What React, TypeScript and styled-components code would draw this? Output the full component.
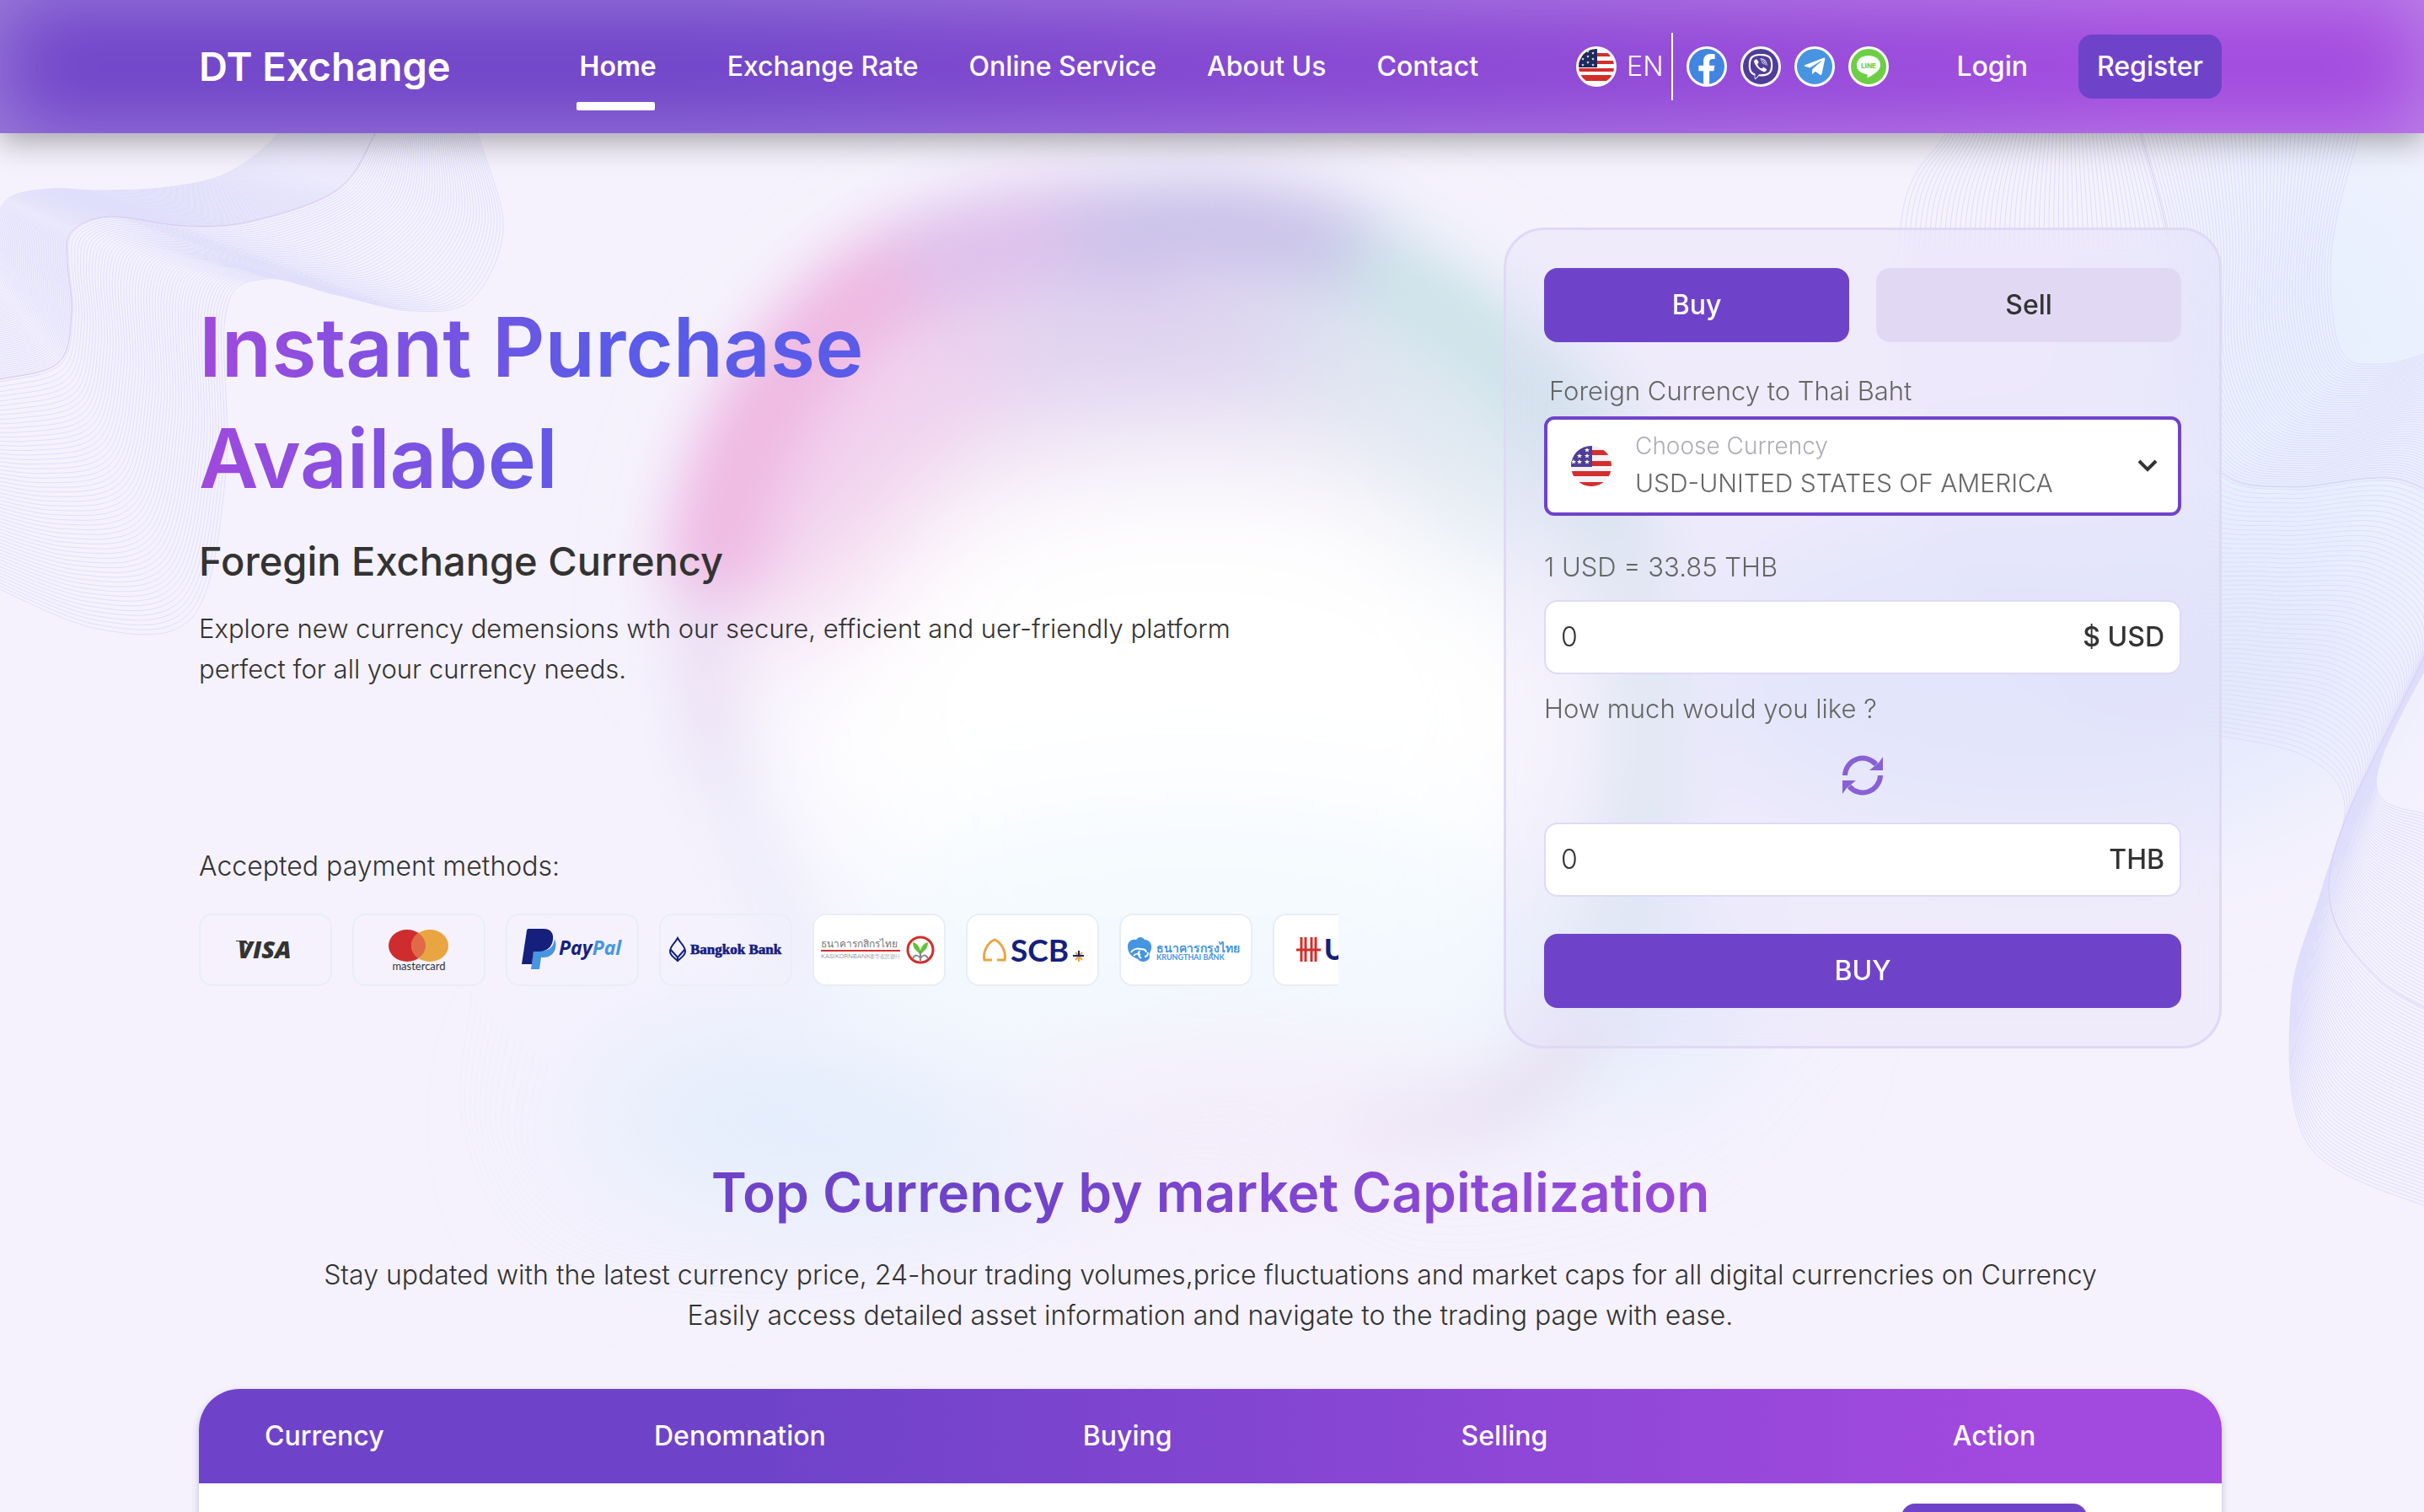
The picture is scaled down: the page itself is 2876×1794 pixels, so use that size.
import React, { useState } from "react";
import styled, { createGlobalStyle } from "styled-components";
import { FaFacebookF, FaTelegramPlane, FaViber } from "react-icons/fa";

const sans = `Inter, "Noto Sans", "Noto Sans CJK SC", sans-serif`;
const violet = "#6f43c9";
const brandGradient = `linear-gradient(90deg, ${violet} 28%, #a249df 90%)`;

const GlobalStyle = createGlobalStyle`
  * { box-sizing: border-box; }
  body { margin: 0; background: #f5f2fd; color: #333; font: 300 32px/48px ${sans}; }
  button, input, select { font: inherit; color: inherit; }
  h1, h2, h3, p { margin: 0; }
`;

const Page = styled.div`
  position: relative;
  height: 100vh;
  overflow: hidden;
`;

const Backdrop = styled.svg`
  position: absolute;
  top: 0;
  left: 0;
  width: 100%;
  height: auto;
  z-index: -1;
`;

const Header = styled.header`
  position: relative;
  background: ${brandGradient};
  color: #fff;
  box-shadow: inset 0 0 100px rgba(255, 255, 255, 0.34), 0 8px 36px rgba(0, 0, 0, 0.36);
`;

const Container = styled.div`
  margin: 0 240px 0 236px;
`;

const HeaderRow = styled(Container)`
  display: flex;
  align-items: center;
  height: 158px;
`;

const Logo = styled.a`
  flex: 1 0 auto;
  color: inherit;
  text-decoration: none;
  font-size: 47px;
  line-height: 64px;
  font-weight: 600;
`;

const Nav = styled.nav`
  display: flex;
  gap: 60px;
  margin-right: 116px;
`;

const NavLink = styled.a<{ $active?: boolean }>`
  position: relative;
  color: inherit;
  text-decoration: none;
  font-weight: ${(p) => (p.$active ? 600 : 500)};
  margin-right: ${(p) => (p.$active ? "24px" : "0")};
  &::after {
    content: "";
    display: ${(p) => (p.$active ? "block" : "none")};
    position: absolute;
    left: -4px;
    right: 2px;
    bottom: -28px;
    height: 10px;
    border-radius: 2px;
    background: #fff;
  }
`;

const Language = styled.button`
  display: flex;
  align-items: center;
  gap: 12px;
  height: 80px;
  padding: 0 10px 0 0;
  border: 0;
  border-right: 2px solid #fff;
  background: none;
  font-weight: 300;
`;

const Socials = styled.div`
  display: flex;
  gap: 16px;
  margin: 0 80px 0 16px;
`;

const Social = styled.a<{ $bg: string }>`
  display: grid;
  place-items: center;
  width: 48px;
  height: 48px;
  border: 3px solid #fff;
  border-radius: 50%;
  overflow: hidden;
  background: ${(p) => p.$bg};
  color: #fff;
`;

const FacebookGlyph = styled(FaFacebookF)`
  align-self: end;
`;

const Login = styled.a`
  color: inherit;
  text-decoration: none;
  font-weight: 500;
  margin-right: 60px;
`;

const Register = styled.button`
  min-width: 170px;
  height: 76px;
  padding: 0 16px;
  border: 0;
  border-radius: 16px;
  background: ${violet};
  font-weight: 500;
`;

const Hero = styled(Container)`
  display: grid;
  grid-template-columns: minmax(0, 1352fr) minmax(0, 852fr);
  gap: 196px;
  padding-top: 112px;
`;

const Intro = styled.div`
  padding-top: 76px;
`;

const Headline = styled.h1`
  font-size: 97px;
  line-height: 132px;
  font-weight: 600;
  background: linear-gradient(90deg, #a049dc 0%, #5a5be8 36%);
  background-clip: text;
  -webkit-background-clip: text;
  color: transparent;
`;

const SubHeadline = styled.h2`
  margin-top: 24px;
  font-size: 47px;
  line-height: 64px;
  font-weight: 500;
`;

const Lead = styled.p`
  margin-top: 24px;
  font-size: 31px;
`;

const PayTitle = styled.h3`
  margin-top: 186px;
  font-size: 32px;
  line-height: 48px;
  font-weight: 300;
`;

const PayStrip = styled.ul`
  display: flex;
  gap: 24px;
  margin: 32px 0 0;
  padding: 0;
  list-style: none;
  overflow: hidden;
`;

const PayCard = styled.li<{ $solid?: boolean }>`
  flex: none;
  width: 158px;
  height: 86px;
  border: 2px solid #e8eef6;
  border-radius: 16px;
  overflow: hidden;
  background: ${(p) => (p.$solid ? "#fff" : "transparent")};
  & > svg {
    display: block;
  }
`;

const Exchange = styled.form`
  display: flex;
  flex-direction: column;
  padding: 45px;
  border: 3px solid #e0d8f4;
  border-radius: 48px;
  background: rgba(228, 220, 247, 0.28);
  backdrop-filter: blur(20px);
`;

const Tabs = styled.div`
  display: grid;
  grid-template-columns: 1fr 1fr;
  gap: 32px;
  margin-bottom: 34px;
`;

const Tab = styled.button<{ $active: boolean }>`
  height: 88px;
  border: 0;
  border-radius: 16px;
  font-weight: 500;
  background: ${(p) => (p.$active ? violet : "#e1d9f4")};
  color: ${(p) => (p.$active ? "#fff" : "#333")};
`;

const FieldLabel = styled.label`
  color: #666;
  font-size: 31px;
`;

const IndentedLabel = styled(FieldLabel)`
  padding-left: 6px;
`;

const SelectBox = styled.div`
  display: flex;
  align-items: center;
  gap: 28px;
  height: 118px;
  margin: 6px 0 37px;
  padding: 0 24px 0 28px;
  border: 4px solid ${violet};
  border-radius: 12px;
  background: #fff;
`;

const SelectText = styled.div`
  flex: 1;
  display: flex;
  flex-direction: column;
`;

const SelectHint = styled.span`
  color: #adadb8;
  font-size: 28px;
  line-height: 40px;
`;

const CurrencySelect = styled.select`
  appearance: none;
  width: 100%;
  height: 48px;
  padding: 0;
  border: 0;
  outline: 0;
  background: none;
  color: #666;
  font-size: 30px;
`;

const AmountBox = styled.div`
  display: flex;
  align-items: center;
  height: 88px;
  padding: 0 18px;
  border: 2px solid #e1d9f4;
  border-radius: 16px;
  background: #fff;
  font-weight: 500;
`;

const Amount = styled.input`
  flex: 1;
  min-width: 0;
  padding: 0;
  border: 0;
  outline: 0;
  background: none;
  font-weight: 300;
`;

const FromAmount = styled(AmountBox)`
  margin: 15px 0 17px;
`;

const Swap = styled.button`
  align-self: center;
  width: 48px;
  height: 48px;
  margin: 31px 0 32px;
  padding: 0;
  border: 0;
  background: none;
`;

const Submit = styled.button`
  height: 88px;
  margin-top: 44px;
  border: 0;
  border-radius: 16px;
  background: ${violet};
  color: #fff;
  font-weight: 500;
`;

const Market = styled(Container)`
  padding-top: 127px;
  text-align: center;
`;

const MarketTitle = styled.h2`
  display: inline-block;
  font-size: 64px;
  line-height: 88px;
  font-weight: 600;
  background: linear-gradient(90deg, ${violet} 28%, #9a49db 100%);
  background-clip: text;
  -webkit-background-clip: text;
  color: transparent;
`;

const MarketText = styled.p`
  margin: 30px 0 63px;
`;

const Rates = styled.table`
  width: 100%;
  table-layout: fixed;
  border-collapse: separate;
  border-spacing: 0;
  border-radius: 48px;
  overflow: hidden;
  background: #fff;
  text-align: left;
  box-shadow: 0 4px 8px rgba(80, 60, 130, 0.3);
  thead {
    background: ${brandGradient};
    color: #fff;
  }
`;

const HeadCell = styled.th<{ $w: string; $center?: boolean; $lead?: boolean }>`
  width: ${(p) => p.$w};
  height: 112px;
  padding: 0 0 0 ${(p) => (p.$lead ? "78px" : "0")};
  font-weight: 500;
  text-align: ${(p) => (p.$center ? "center" : "left")};
`;

const Cell = styled.td`
  padding: 24px 0;
  text-align: center;
`;

const RowAction = styled.button`
  width: 220px;
  height: 88px;
  border: 0;
  border-radius: 16px;
  background: ${violet};
`;

/* ---------- background artwork ---------- */

type Pt = [number, number];

const leftWave: Pt[][] = [
  [[350, 100], [330, 158], [270, 205], [200, 222], [120, 226], [60, 224], [10, 235], [-5, 270], [-10, 300], [-20, 320], [-60, 330], [-100, 340]],
  [[470, 90], [445, 158], [400, 225], [300, 262], [220, 268], [130, 257], [85, 275], [80, 310], [85, 370], [70, 430], [0, 450], [-80, 460]],
  [[555, 90], [567, 158], [597, 270], [560, 355], [490, 369], [400, 350], [315, 331], [268, 370], [268, 560], [230, 730], [120, 747], [-20, 690]],
];

const rightWave: Pt[][] = [
  [[2340, 90], [2308, 158], [2255, 270], [2270, 600], [2450, 850], [2640, 874], [2740, 900], [2782, 955], [2755, 1055], [2718, 1190], [2740, 1360], [2890, 1436]],
  [[2520, 90], [2540, 158], [2575, 300], [2580, 470], [2637, 562], [2720, 578], [2850, 570], [2930, 640], [2880, 770], [2765, 1030], [2820, 1160], [2960, 1230]],
  [[2810, 90], [2799, 158], [2772, 260], [2765, 340], [2780, 420], [2830, 432], [2940, 420], [3010, 560], [2930, 700], [2820, 920], [2890, 970], [3000, 1000]],
];

const bottomWave: Pt[][] = [
  [[560, 1180], [550, 1340], [640, 1490], [900, 1540], [1180, 1500], [1420, 1380], [1700, 1500], [2020, 1440], [2200, 1260]],
  [[600, 1220], [590, 1360], [700, 1480], [920, 1500], [1160, 1440], [1440, 1340], [1680, 1440], [1940, 1390], [2120, 1240]],
  [[650, 1260], [640, 1380], [760, 1460], [940, 1470], [1140, 1400], [1450, 1300], [1660, 1390], [1860, 1340], [2040, 1220]],
];

function blend(set: Pt[][], t: number): Pt[] {
  const k = t < 0.5 ? 0 : 1;
  const f = t * 2 - k;
  return set[k].map(([x, y], i) => [x + (set[k + 1][i][0] - x) * f, y + (set[k + 1][i][1] - y) * f]);
}

function smooth(p: Pt[]): string {
  let d = `M${p[0].join(" ")}`;
  for (let i = 0; i < p.length - 1; i++) {
    const a = p[Math.max(0, i - 1)];
    const b = p[i];
    const c = p[i + 1];
    const e = p[Math.min(p.length - 1, i + 2)];
    d += `C${b[0] + (c[0] - a[0]) / 6} ${b[1] + (c[1] - a[1]) / 6} ${c[0] - (e[0] - b[0]) / 6} ${c[1] - (e[1] - b[1]) / 6} ${c[0]} ${c[1]}`;
  }
  return d;
}

function Wave({ set, count, color, accent }: { set: Pt[][]; count: number; color: string; accent?: string }) {
  return (
    <g fill="none" stroke={color} strokeWidth="1">
      {Array.from({ length: count }, (_, i) => (
        <path key={i} d={smooth(blend(set, i / (count - 1)))} />
      ))}
      {accent && <path d={smooth(set[1])} stroke={accent} />}
    </g>
  );
}

function Artwork() {
  return (
    <Backdrop viewBox="0 0 2876 1794" aria-hidden="true">
      <defs>
        <filter id="soft" x="-50%" y="-50%" width="200%" height="200%">
          <feGaussianBlur stdDeviation="34" />
        </filter>
        <filter id="wide" x="-60%" y="-60%" width="220%" height="220%">
          <feGaussianBlur stdDeviation="80" />
        </filter>
      </defs>
      <g filter="url(#wide)">
        <ellipse cx="2760" cy="440" rx="200" ry="300" fill="#e8f0fe" />
        <ellipse cx="2420" cy="800" rx="420" ry="190" fill="#e2e9fd" />
        <ellipse cx="980" cy="1330" rx="300" ry="110" fill="#e2edfc" />
        <ellipse cx="1900" cy="1180" rx="180" ry="120" fill="#e3ecfc" />
      </g>
      <g filter="url(#soft)" fill="none" strokeWidth="110">
        <path d="M870 940C840 860 836 760 850 660" stroke="#e9dff4" strokeWidth="70" />
        <path d="M860 700C870 520 980 360 1130 310" stroke="#eeb3e0" strokeWidth="130" />
        <path d="M1080 340C1200 280 1300 290 1400 300" stroke="#dfc0ec" strokeWidth="140" />
        <path d="M1280 300C1420 260 1540 280 1640 330" stroke="#c6bfe8" strokeWidth="120" />
        <path d="M1600 320C1740 380 1850 480 1910 600" stroke="#cbe3e8" strokeWidth="120" />
        <path d="M1900 600C1960 760 1960 1000 1890 1200" stroke="#d9e8ee" strokeWidth="90" />
        <path d="M1880 1180C1820 1310 1740 1330 1600 1310" stroke="#e4dcf0" strokeWidth="80" />
        <path d="M870 900C900 1040 940 1080 980 1160" stroke="#eae8f9" strokeWidth="60" />
      </g>
      <g filter="url(#wide)">
        <path d="M930 740C950 560 1040 440 1200 400" fill="none" stroke="#f0c4e8" strokeWidth="150" />
        <path d="M1180 420C1300 370 1440 370 1560 400" fill="none" stroke="#d6c9ec" strokeWidth="170" />
        <path d="M1540 400C1680 430 1780 540 1820 660" fill="none" stroke="#d3e4ec" strokeWidth="150" />
        <ellipse cx="1390" cy="620" rx="340" ry="160" fill="#f3eaf8" />
        <ellipse cx="1410" cy="860" rx="480" ry="300" fill="#fff" />
        <ellipse cx="1410" cy="860" rx="400" ry="280" fill="#fff" />
        <ellipse cx="1420" cy="1130" rx="450" ry="170" fill="#f3f9fe" />
        <ellipse cx="1480" cy="1320" rx="280" ry="60" fill="#f5e7f9" />
      </g>
      <Wave set={leftWave} count={110} color="#e0dffb" accent="#dcc6ec" />
      <Wave set={rightWave} count={110} color="#deddfb" accent="#d9cdf1" />
      <Wave set={bottomWave} count={14} color="#f0effc" />
    </Backdrop>
  );
}

/* ---------- icons ---------- */

function UsFlag({ id, ring, blue }: { id: string; ring?: boolean; blue: string }) {
  const r = ring ? 21 : 24;
  const stripes = ring ? [12, 21, 30, 38] : [5, 18, 30, 43];
  const stars = ring
    ? [[8, 8], [14, 6], [20, 8], [8, 15], [14, 12], [20, 15], [8, 22], [14, 19], [20, 22]]
    : [[19, 5], [10, 12], [19, 12], [10, 19], [19, 19], [3, 19]];
  return (
    <svg width="48" height="48" viewBox="0 0 48 48" aria-hidden="true">
      <clipPath id={id}>
        <circle cx="24" cy="24" r={r} />
      </clipPath>
      {ring && <circle cx="24" cy="24" r="24" fill="#fff" />}
      <g clipPath={`url(#${id})`}>
        <rect width="48" height="48" fill={ring ? "#fff" : "#f3f1f8"} />
        {stripes.map((y) => (
          <rect key={y} y={y - (ring ? 4 : 0)} width="48" height={ring ? 4 : 6} fill="#d22f2c" />
        ))}
        {ring && <rect y="37" width="48" height="4" fill="#d22f2c" />}
        <rect width="25" height="25" fill={blue} />
        {stars.map(([x, y]) => (
          <path
            key={`${x}-${y}`}
            transform={`translate(${x} ${y}) scale(${ring ? 0.6 : 1})`}
            fill="#fff"
            d="M0-3L.8-1 3-1 1.300.4 1.900 2.600 0 1.300-1.900 2.600-1.300.4-3-1-.8-1z"
          />
        ))}
      </g>
    </svg>
  );
}

function LineBubble() {
  return (
    <svg width="42" height="42" viewBox="0 0 42 42" aria-hidden="true">
      <path d="M21 8C12 8 7 13 7 19.500c0 5.500 4.500 9.500 11.500 10.500 1.500.3 1 2 .8 4.500C25 32 35 26 35 19.500 35 13 30 8 21 8z" fill="#fff" />
      <text x="21" y="23" textAnchor="middle" fontFamily="Inter" fontWeight="800" fontSize="8" fill="#6ccf45">
        LINE
      </text>
    </svg>
  );
}

function SwapIcon() {
  const half = (
    <>
      <path d="M3 24A21 21 0 0 1 40 11" fill="none" stroke="#8860d6" strokeWidth="6" />
      <path d="M48 2V18H32L38 13L43 9z" fill="#8860d6" />
    </>
  );
  return (
    <svg width="48" height="48" viewBox="0 0 48 48" aria-hidden="true">
      {half}
      <g transform="rotate(180 24 24)">{half}</g>
    </svg>
  );
}

/* ---------- payment marks ---------- */

function Mark({ label, children }: { label: string; children: React.ReactNode }) {
  return (
    <svg width="154" height="82" viewBox="2 2 154 82" role="img" aria-label={label}>
      {children}
    </svg>
  );
}

const VisaMark = () => (
  <Mark label="Visa">
    <text x="46" y="53" fontFamily="Open Sans" fontStyle="italic" fontWeight="800" fontSize="29" fill="#333">VISA</text>
    <path d="M44 32h12l4 6c-5-3-9-5-16-5z" fill="#333" />
  </Mark>
);

const MastercardMark = () => (
  <Mark label="Mastercard">
    <ellipse cx="65" cy="38" rx="22" ry="19" fill="#cf2d2d" />
    <ellipse cx="92" cy="38" rx="22" ry="19" fill="#e9a541" />
    <path d="M78.500 23a22 19 0 0 1 0 30a22 19 0 0 1 0-30z" fill="#e06a47" />
    <text x="79" y="67" textAnchor="middle" fontFamily="Lato" fontWeight="400" fontSize="13" fill="#333">mastercard</text>
  </Mark>
);

const PaypalMark = () => (
  <Mark label="PayPal">
    <path d="M30 66l3-22h10c10 0 14-6 15-14 4 9 0 22-13 22h-3l-2 14z" fill="#4795e0" />
    <path d="M19 60L25 20q.3-2 2-2h18c9 0 12 6 11 13-1 9-8 14-17 14h-6l-2 15z" fill="#15207c" />
    <text x="63" y="49" fontFamily="Open Sans" fontStyle="italic" fontWeight="700" fontSize="23" fill="#15207c">
      Pay<tspan fill="#4795e0">Pal</tspan>
    </text>
  </Mark>
);

const BangkokMark = () => (
  <Mark label="Bangkok Bank">
    <path d="M22 29c3 6 9 9 9 16 0 5-5 7-9 11-4-4-9-6-9-11 0-7 6-10 9-16zM13 42l9 10 9-10M22 52v5" fill="none" stroke="#15207c" strokeWidth="2" />
    <text x="37" y="48" fontFamily="Liberation Serif" fontWeight="700" fontSize="17" fill="#15207c" stroke="#15207c" strokeWidth="0.6">Bangkok Bank</text>
  </Mark>
);

const KasikornMark = () => (
  <Mark label="Kasikornbank">
    <text x="10" y="40" fontFamily="Noto Sans" fontWeight="500" fontSize="12" fill="#777">ธนาคารกสิกรไทย</text>
    <rect x="10" y="43" width="94" height="2" fill="#d22f2c" />
    <text x="10" y="53" fontFamily="Roboto" fontSize="8" fill="#777">KASIKORNBANK</text>
    <text x="68" y="53" fontFamily="Noto Sans CJK SC" fontSize="6" fill="#777">泰华农民银行</text>
    <circle cx="128" cy="43" r="15" fill="#fff" stroke="#d22f2c" strokeWidth="3" />
    <path d="M128 50c-2-6-9-6-9-16 5 1 8 5 9 10 1-5 4-9 9-10 0 10-7 10-9 16z" fill="#63c23b" />
    <path d="M119 53c3-5 6-4 9 0 3-4 6-5 9 0M128 44v12" fill="none" stroke="#888" strokeWidth="2" />
  </Mark>
);

const ScbMark = () => (
  <Mark label="SCB">
    <path d="M31 55h-9c-2-9 3-20 12-24 9 4 14 15 12 24h-9" fill="none" stroke="#e9a541" strokeWidth="3" />
    <text x="53" y="57" fontFamily="Lato" fontWeight="700" fontSize="37" fill="#15207c">SCB</text>
    <path d="M130 46l8 9M138 46l-8 9M134 50v7" stroke="#e9a541" strokeWidth="2" />
    <path d="M127 50h13M134 44v6" stroke="#15207c" strokeWidth="2" />
  </Mark>
);

const KrungthaiMark = () => (
  <Mark label="Krungthai Bank">
    <path d="M10 39c0-6 5-9 10-8 3-5 9-3 10 0 6 0 9 5 8 11-1 4-3 5-2 9 0 4-5 6-8 6-5 0-4-3-8-4-6-2-10-7-10-14z" fill="#4795e0" />
    <path d="M14 46c2-4 8-5 11-4 3 1 6-1 7 4M17 50c3-3 5-3 8-1M24 44c-2 4-1 7 2 9M30 51c3 0 4-2 4-5" fill="none" stroke="#fff" strokeWidth="2" />
    <text x="44" y="46" fontFamily="Noto Sans" fontWeight="700" fontSize="14" fill="#4795e0">ธนาคารกรุงไทย</text>
    <text x="44" y="55" fontFamily="Lato" fontWeight="700" fontSize="9" fill="#4795e0">KRUNGTHAI BANK</text>
  </Mark>
);

const UobMark = () => (
  <Mark label="UOB">
    <path d="M34 28v29M39 28v29M46 28v29M51 28v29" stroke="#d22f2c" strokeWidth="3" />
    <path d="M28 43h29" stroke="#d22f2c" strokeWidth="3" />
    <text x="61" y="55" fontFamily="Lato" fontWeight="900" fontSize="34" fill="#15207c">UOB</text>
  </Mark>
);

const payments = [
  { name: "visa", Logo: VisaMark, solid: false },
  { name: "mastercard", Logo: MastercardMark, solid: false },
  { name: "paypal", Logo: PaypalMark, solid: false },
  { name: "bangkok", Logo: BangkokMark, solid: false },
  { name: "kasikorn", Logo: KasikornMark, solid: true },
  { name: "scb", Logo: ScbMark, solid: true },
  { name: "krungthai", Logo: KrungthaiMark, solid: true },
  { name: "uob", Logo: UobMark, solid: true },
];

const navItems = ["Home", "Exchange Rate", "Online Service", "About Us", "Contact"];

export default function App() {
  const [mode, setMode] = useState<"buy" | "sell">("buy");
  const [from, setFrom] = useState("0");
  const [to, setTo] = useState("0");

  return (
    <Page>
      <GlobalStyle />
      <Artwork />
      <Header>
        <HeaderRow>
          <Logo href="#">DT Exchange</Logo>
          <Nav>
            {navItems.map((item, i) => (
              <NavLink key={item} href="#" $active={i === 0}>{item}</NavLink>
            ))}
          </Nav>
          <Language type="button">
            <UsFlag id="flag-nav" ring blue="#1f2a5c" />
            EN
          </Language>
          <Socials>
            <Social href="#" aria-label="Facebook" $bg="#4285e0"><FacebookGlyph size={36} /></Social>
            <Social href="#" aria-label="Viber" $bg="#4f3d99"><FaViber size={30} /></Social>
            <Social href="#" aria-label="Telegram" $bg="#4795e0"><FaTelegramPlane size={28} /></Social>
            <Social href="#" aria-label="Line" $bg="#6ccf45"><LineBubble /></Social>
          </Socials>
          <Login href="#">Login</Login>
          <Register type="button">Register</Register>
        </HeaderRow>
      </Header>

      <main>
        <Hero>
          <Intro>
            <Headline>Instant Purchase<br />Availabel</Headline>
            <SubHeadline>Foregin Exchange Currency</SubHeadline>
            <Lead>
              Explore new currency demensions wth our secure, efficient and uer-friendly platform
              <br />
              perfect for all your currency needs.
            </Lead>
            <PayTitle>Accepted payment methods:</PayTitle>
            <PayStrip>
              {payments.map(({ name, Logo: Brand, solid }) => (
                <PayCard key={name} $solid={solid}><Brand /></PayCard>
              ))}
            </PayStrip>
          </Intro>

          <Exchange onSubmit={(e) => e.preventDefault()}>
            <Tabs>
              <Tab type="button" $active={mode === "buy"} onClick={() => setMode("buy")}>Buy</Tab>
              <Tab type="button" $active={mode === "sell"} onClick={() => setMode("sell")}>Sell</Tab>
            </Tabs>
            <IndentedLabel htmlFor="currency">Foreign Currency to Thai Baht</IndentedLabel>
            <SelectBox>
              <UsFlag id="flag-select" blue="#4f3d99" />
              <SelectText>
                <SelectHint>Choose Currency</SelectHint>
                <CurrencySelect id="currency">
                  <option>USD-UNITED STATES OF AMERICA</option>
                </CurrencySelect>
              </SelectText>
              <svg width="24" height="16" viewBox="0 0 24 16" aria-hidden="true">
                <path d="M2 2l10 10L22 2" fill="none" stroke="#333" strokeWidth="4" />
              </svg>
            </SelectBox>
            <FieldLabel htmlFor="from">1 USD = 33.85 THB</FieldLabel>
            <FromAmount>
              <Amount id="from" value={from} onChange={(e) => setFrom(e.target.value)} />
              $ USD
            </FromAmount>
            <FieldLabel htmlFor="to">How much would you like ?</FieldLabel>
            <Swap type="button" aria-label="Swap currencies"><SwapIcon /></Swap>
            <AmountBox>
              <Amount id="to" value={to} onChange={(e) => setTo(e.target.value)} />
              THB
            </AmountBox>
            <Submit type="submit">BUY</Submit>
          </Exchange>
        </Hero>

        <Market>
          <MarketTitle>Top Currency by market Capitalization</MarketTitle>
          <MarketText>
            Stay updated with the latest currency price, 24-hour trading volumes,price fluctuations and market caps for all digital currencries on Currency
            <br />
            Easily access detailed asset information and navigate to the trading page with ease.
          </MarketText>
          <Rates>
            <thead>
              <tr>
                <HeadCell $w="22.5%" $lead>Currency</HeadCell>
                <HeadCell $w="21.2%">Denomnation</HeadCell>
                <HeadCell $w="18.7%">Buying</HeadCell>
                <HeadCell $w="15.1%">Selling</HeadCell>
                <HeadCell $w="22.5%" $center>Action</HeadCell>
              </tr>
            </thead>
            <tbody>
              <tr>
                <Cell />
                <Cell />
                <Cell />
                <Cell />
                <Cell><RowAction type="button" aria-label="Buy USD" /></Cell>
              </tr>
            </tbody>
          </Rates>
        </Market>
      </main>
    </Page>
  );
}
